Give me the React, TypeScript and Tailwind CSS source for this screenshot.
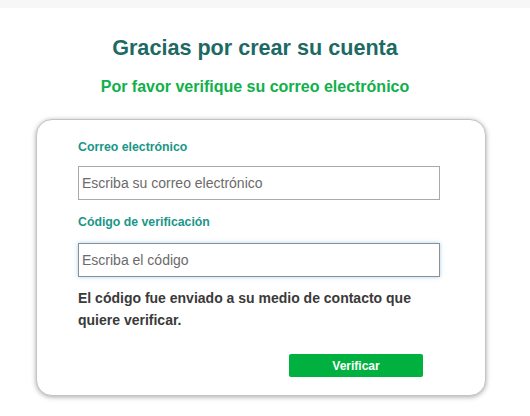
import React from 'react';

export default function App() {
  return (
    <div className="min-h-[416px] bg-white font-['Liberation_Sans',Arial,sans-serif]">
      <div className="h-[8px] bg-[#f7f7f7]" />
      <div className="flex flex-col items-center pr-[20px]">
        <h1 className="mt-[26px] text-[21.6px] leading-[28px] font-bold text-[#1c6a63]">
          Gracias por crear su cuenta
        </h1>
        <h2 className="mt-[15px] text-[16px] leading-[20px] font-bold text-[#10b04a]">
          Por favor verifique su correo electrónico
        </h2>
      </div>

      <div className="ml-[36px] mt-[22px] w-[450px] h-[277px] rounded-[16px] border border-[#c4c4c4] bg-white shadow-[0_1px_5px_rgba(0,0,0,0.35)] pl-[41px] pr-[45px] pt-[19px]">
        <label className="block text-[12.3px] leading-[16px] font-bold text-[#1a9688]">
          Correo electrónico
        </label>
        <input
          className="mt-[11px] block w-[362px] h-[34px] border border-[#a9a9a9] bg-white px-[3px] text-[14px] text-[#555] placeholder:text-[#6b6b6b] outline-none"
          placeholder="Escriba su correo electrónico"
        />
        <label className="mt-[14px] block text-[12.3px] leading-[16px] font-bold text-[#1a9688]">
          Código de verificación
        </label>
        <input
          className="mt-[13px] block w-[362px] h-[34px] border border-[#8f8f8f] bg-white px-[3px] text-[14px] text-[#555] placeholder:text-[#6b6b6b] outline-none shadow-[0_0_4px_rgba(102,175,233,0.6)]"
          placeholder="Escriba el código"
        />
        <p className="mt-[10px] text-[14px] leading-[22px] font-bold text-[#3a3a3a]">
          El código fue enviado a su medio de contacto que
          <br />
          quiere verificar.
        </p>
        <div className="mt-[23px] flex">
          <button className="ml-[211px] w-[134px] h-[23px] rounded-[2px] bg-[#00b140] text-white text-[12px] font-bold">
            Verificar
          </button>
        </div>
      </div>
    </div>
  );
}
